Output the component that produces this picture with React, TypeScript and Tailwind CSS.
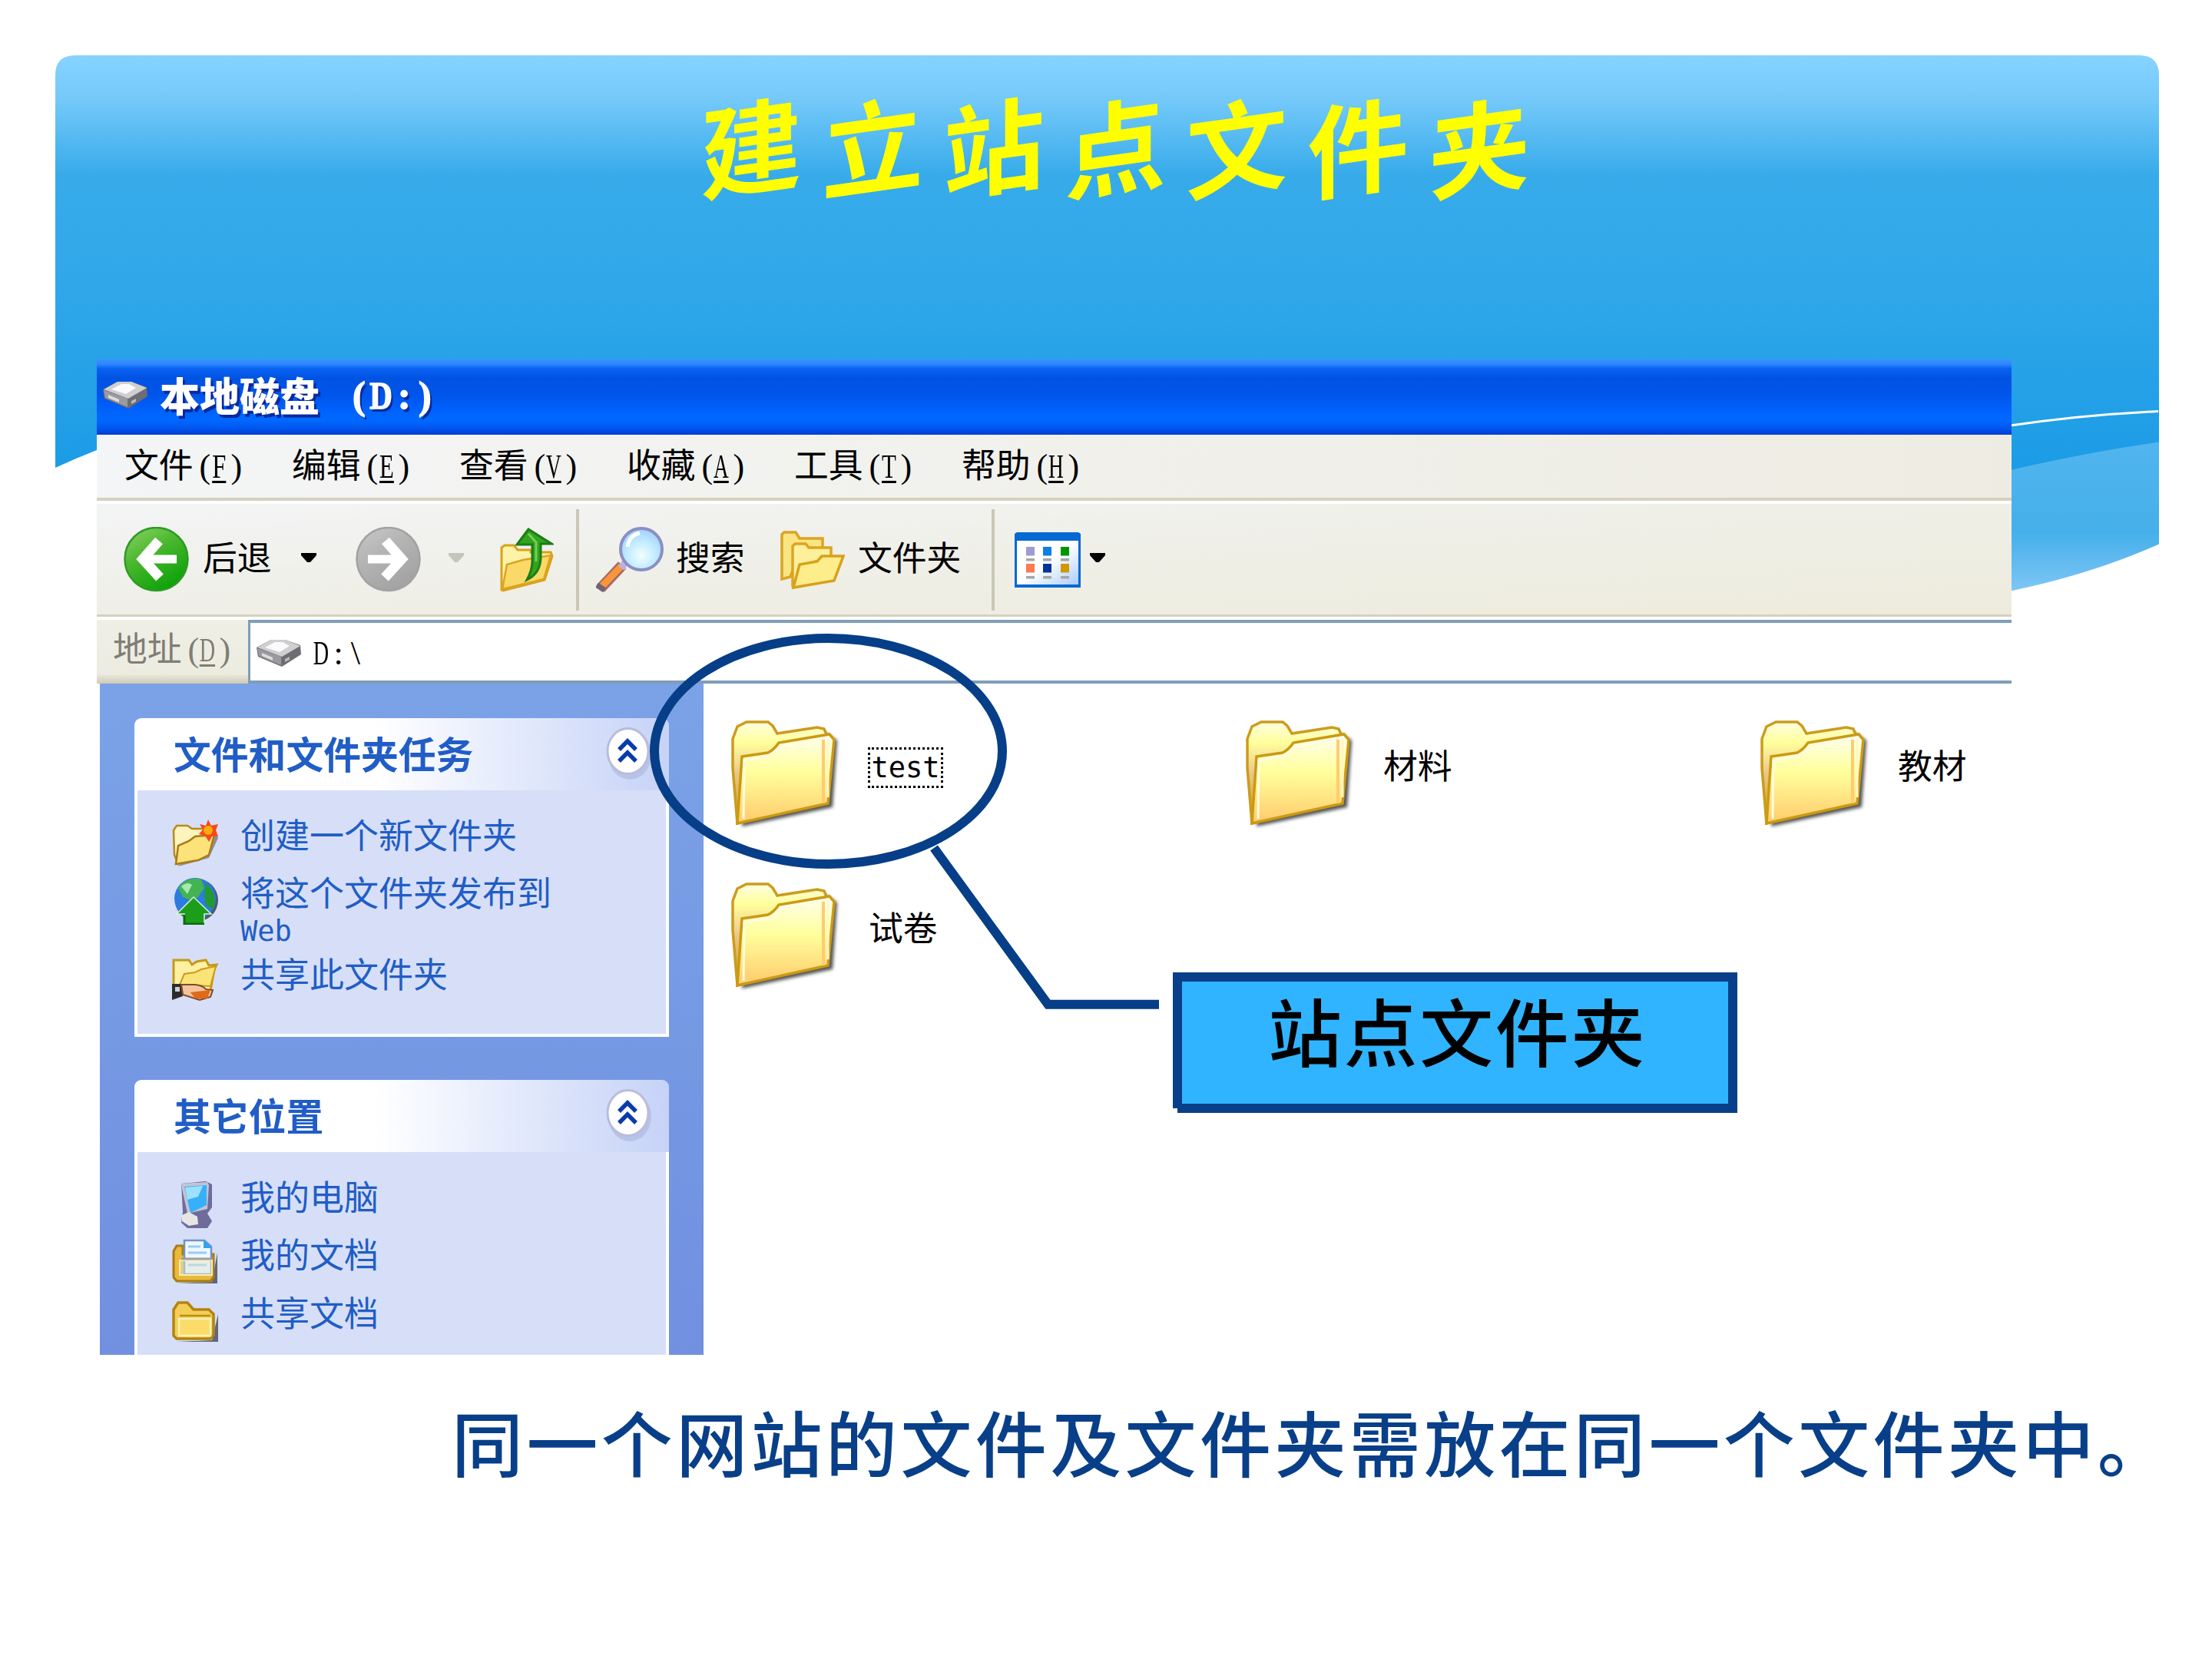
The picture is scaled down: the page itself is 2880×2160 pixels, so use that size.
import React from "react";

const CJK = "font-['Noto_Sans_CJK_SC',sans-serif]";

function Backdrop() {
  return (
    <svg className="absolute inset-0 h-[2160px] w-[2880px]" viewBox="0 0 2880 2160">
      <defs>
        <linearGradient id="sky" gradientUnits="userSpaceOnUse" x1="0" y1="72" x2="0" y2="650">
          <stop offset="0" stopColor="#86d3ff" />
          <stop offset="0.1" stopColor="#74c9f9" />
          <stop offset="0.27" stopColor="#37abea" />
          <stop offset="0.45" stopColor="#33a9ea" />
          <stop offset="1" stopColor="#189ae5" />
        </linearGradient>
        <linearGradient id="wave" gradientUnits="userSpaceOnUse" x1="0" y1="575" x2="0" y2="770">
          <stop offset="0" stopColor="#51b5ef" />
          <stop offset="0.6" stopColor="#45afea" />
          <stop offset="1" stopColor="#7ec6f5" />
        </linearGradient>
      </defs>
      <path d="M72 609V98Q72 72 98 72H2785Q2811 72 2811 98V620H2600V700H126V586Q98 597 72 609Z" fill="url(#sky)" />
      <path d="M2600 616Q2715 589 2811 575.5V708.5Q2715 751 2600 773Z" fill="url(#wave)" />
      <path d="M2610 555Q2710 540 2810 535.5" fill="none" stroke="#fff" strokeWidth="3" />
    </svg>
  );
}

function DriveIcon({ className }: { className: string }) {
  return (
    <svg className={className} viewBox="0 0 60 36">
      <path d="M1 11 20 1h18l20 7 1 12L34 36 3 23Z" fill="#6d6d73" />
      <path d="M2 11 20 1h18l20 8-24 14Z" fill="#cfcfd1" />
      <path d="M12 11 25 4h10l9 5-13 8Z" fill="#fafafa" />
      <path d="M2 12 33 23v11L4 22Z" fill="#9b9b9f" />
      <path d="M8 18l14 6v4L8 22Z" fill="#dcdcdc" />
      <path d="M38 26l6-3v4l-6 3Z" fill="#b9b9bb" />
    </svg>
  );
}

function RoundArrow({ disabled = false }: { disabled?: boolean }) {
  const id = disabled ? "ra-off" : "ra-on";
  return (
    <svg className="h-[86px] w-[85px] shrink-0" viewBox="0 0 85 86">
      <defs>
        <linearGradient id={id} x1="0" y1="0" x2="0.6" y2="1">
          <stop offset="0" stopColor={disabled ? "#c9c9c9" : "#8fd468"} />
          <stop offset="0.45" stopColor={disabled ? "#b4b4b4" : "#4cb82f"} />
          <stop offset="1" stopColor={disabled ? "#a3a3a3" : "#0fa20b"} />
        </linearGradient>
      </defs>
      <ellipse cx="42.5" cy="42" rx="41" ry="41" fill={`url(#${id})`} stroke={disabled ? "#a2a2a2" : "#2f9a26"} strokeWidth="2.5" />
      <g fill="none" stroke="#fff" transform={disabled ? "matrix(-1 0 0 1 85 0)" : undefined}>
        <path d="M69 42H24" strokeWidth="11" />
        <path d="M46 18 25 42 47 66" strokeWidth="13" strokeLinejoin="miter" />
      </g>
    </svg>
  );
}

function UpFolder() {
  return (
    <svg className="h-[84px] w-[70px] shrink-0" viewBox="0 0 70 84">
      <path d="M2 81V26L6 23H18L23 29H40V32H66L68 37 58 68 4 82Z" fill="#fdf3a8" stroke="#d9a21b" strokeWidth="3" />
      <path d="M3 80 9 48 30 42 66 36 57 67Z" fill="#fbd969" stroke="#dba51f" strokeWidth="2.5" />
      <path d="M37 2 67 21H53V40Q52 60 35 68 42 55 42 44V22H22Z" fill="#32a51f" stroke="#1c7d17" strokeWidth="3" />
      <path d="M37 8 47 19V44" fill="none" stroke="#75cf4f" strokeWidth="3" />
    </svg>
  );
}

function SearchIcon() {
  return (
    <svg className="h-[87px] w-[88px] shrink-0" viewBox="0 0 88 87">
      <defs>
        <radialGradient id="lens" cx="0.5" cy="0.65" r="0.6">
          <stop offset="0" stopColor="#f2ffff" />
          <stop offset="0.6" stopColor="#bfeaff" />
          <stop offset="1" stopColor="#a8d2fb" />
        </radialGradient>
      </defs>
      <path d="M34 50 6 80" stroke="#a96a63" strokeWidth="14" />
      <path d="M33 51 8 77" stroke="#f9953a" strokeWidth="9" />
      <path d="M8 76 4 82" stroke="#6d6577" strokeWidth="12" />
      <path d="M38 46 33 54" stroke="#b9b4dc" strokeWidth="9" />
      <ellipse cx="59" cy="29" rx="27" ry="27" fill="url(#lens)" stroke="#8a8fc4" strokeWidth="4" />
      <path d="M41 26Q43 11 57 8" fill="none" stroke="#fff" strokeWidth="5" />
    </svg>
  );
}

function FoldersIcon() {
  return (
    <svg className="h-[77px] w-[84px] shrink-0" viewBox="0 0 84 77">
      <path d="M2 63V5L5 2H20L25 10H55V24L20 40 13 60Z" fill="#fbe582" stroke="#dba424" strokeWidth="3.5" />
      <path d="M16 73V20L19 17H33L37 22H66V34L30 45Z" fill="#fdf09a" stroke="#dba424" strokeWidth="3.5" />
      <path d="M17 74 25 44 48 40 54 33H82L70 65Z" fill="#fdee8b" stroke="#d9a01b" strokeWidth="3.5" />
    </svg>
  );
}

function ViewsIcon() {
  const cells: [number, number, string][] = [
    [15, 19, "#9c9bd3"], [37, 19, "#0d7fe6"], [60, 19, "#009600"],
    [15, 41, "#fa7b50"], [37, 41, "#06349b"], [60, 41, "#cf9a00"],
  ];
  return (
    <svg className="h-[72px] w-[86px] shrink-0" viewBox="0 0 86 72">
      <defs>
        <linearGradient id="views" x1="0" y1="0" x2="1" y2="1">
          <stop offset="0.5" stopColor="#fff" />
          <stop offset="1" stopColor="#a9cdf8" />
        </linearGradient>
      </defs>
      <path d="M0 2 3 0H83L86 2V72H0Z" fill="#0768d2" />
      <rect x="3" y="11" width="80" height="57" fill="url(#views)" />
      {cells.map(([x, y, c]) => (
        <g key={`${x}-${y}`}>
          <rect x={x} y={y} width="11" height="11.5" fill={c} />
          <rect x={x} y={y + (y < 30 ? 15 : 16)} width="11" height="3.5" fill="#a6a6a6" />
        </g>
      ))}
    </svg>
  );
}

function FolderIcon() {
  return (
    <svg className="h-[144px] w-[144px] shrink-0 overflow-visible" viewBox="0 0 144 144">
      <defs>
        <linearGradient id="face" x1="0" y1="0" x2="0" y2="1">
          <stop offset="0" stopColor="#fffff0" />
          <stop offset="0.42" stopColor="#ffff9c" />
          <stop offset="1" stopColor="#ffca6b" />
        </linearGradient>
        <linearGradient id="back" x1="0" y1="0" x2="0" y2="1">
          <stop offset="0" stopColor="#fffde0" />
          <stop offset="0.2" stopColor="#ffff9c" />
          <stop offset="0.5" stopColor="#ecc889" />
          <stop offset="1" stopColor="#c99b12" />
        </linearGradient>
        <filter id="fshadow" x="-10%" y="-10%" width="125%" height="125%">
          <feGaussianBlur stdDeviation="2" />
        </filter>
      </defs>
      <path d="M14 138 132 113 138 26 120 14 16 100Z" fill="#555" filter="url(#fshadow)" />
      <path d="M2 24 8 8 20 2H48L54 7 60 17 112 9 121 11 124 18 120 104 8 134 2 62Z" fill="url(#back)" stroke="#cb9c1e" strokeWidth="3.5" />
      <path d="M14 47 48 42Q56 38 62 29L128 18 134 25 126 108 8 134Z" fill="url(#face)" stroke="#cb9a12" strokeWidth="3.5" />
      <path d="M16 128 17 52 48 46Q60 41 64 33L118 25" fill="none" stroke="#fffbe0" strokeWidth="3" />
      <path d="M120 25V108" stroke="#ffcb71" strokeWidth="4" />
      <path d="M126 24V100" stroke="#fff6c8" strokeWidth="3" />
    </svg>
  );
}

const taskIcon = "h-[62px] w-[62px]";

function NewFolder() {
  return (
    <svg className={taskIcon} viewBox="0 0 62 62">
      <path d="M8 61 48 50 60 24 56 16 20 50Z" fill="#8b8d9c" />
      <path d="M2 14 6 8H20L26 12H50V30L8 58 3 46Z" fill="#fdf3bd" stroke="#b98a1d" strokeWidth="2.5" />
      <path d="M5 58 8 34 22 28 30 22 55 20 48 46 34 53Z" fill="#fbe27b" stroke="#a87a14" strokeWidth="2.5" />
      <path d="M47 0 51 8 60 6 57 14 60 22 52 22 48 29 43 21 35 19 40 13 36 6 44 8Z" fill="#f8471d" />
      <circle cx="47" cy="14" r="6" fill="#ffac0a" />
    </svg>
  );
}

function PublishWeb() {
  return (
    <svg className={taskIcon} viewBox="0 0 62 62">
      <circle cx="32" cy="30" r="28" fill="#50577c" />
      <circle cx="30" cy="28" r="27" fill="#2b7be0" />
      <path d="M8 14Q20-2 38 3L42 14 34 26 24 30 14 26Z" fill="#44b351" />
      <path d="M44 8Q60 22 54 42L44 36 42 22Z" fill="#219a2f" />
      <path d="M12 12Q20 5 26 10L20 22Z" fill="#a7e9b0" />
      <path d="M28 26 51 48H42V61H16V48H6Z" fill="#1c9e1a" stroke="#d9f3d6" strokeWidth="1.5" />
      <path d="M16 49V61H42" fill="none" stroke="#0b6a10" strokeWidth="3" />
    </svg>
  );
}

function ShareFolder() {
  return (
    <svg className={taskIcon} viewBox="0 0 62 62">
      <path d="M2 36V2H22L26 8 32 4 44 2 48 9 58 8 55 14 50 42 4 42Z" fill="#fdf0a3" stroke="#c69a17" strokeWidth="3" />
      <path d="M10 34 16 20 30 18 38 14 57 10 50 36Z" fill="#fbe477" stroke="#c99b19" strokeWidth="2" />
      <path d="M0 33H14V49L0 54Z" fill="#2b2b2d" />
      <path d="M4 37H10V43H4Z" fill="#cfcfd2" />
      <path d="M12 34 30 34Q40 35 44 40L53 41 50 50 36 54 14 47Z" fill="#f4c39a" stroke="#7d4b2b" strokeWidth="2" />
      <path d="M24 44 50 41 46 52 30 52Z" fill="#e0691c" />
    </svg>
  );
}

function Computer() {
  return (
    <svg className={taskIcon} viewBox="0 0 62 62">
      <path d="M12 3 44 0 52 4 52 34 46 42 52 52 46 61H20L12 54 14 40Z" fill="#6f6c9c" />
      <path d="M12 3 46 1 48 5 46 36 20 42 13 10Z" fill="#c3c3d4" />
      <path d="M16 7 45 5 45 31 24 41Z" fill="#36b0fb" />
      <path d="M17 8 40 6 34 20 20 24Z" fill="#9be2fe" />
      <path d="M13 44 22 40 33 46 34 56 22 58 13 52Z" fill="#e7e6e4" />
    </svg>
  );
}

function MyDocs() {
  return (
    <svg className={taskIcon} viewBox="0 0 62 62">
      <path d="M6 58H59V18L52 56Z" fill="#63667a" />
      <path d="M2 16 6 9H14V20H54V50L50 55H6L2 50Z" fill="#e9b93a" stroke="#a97c14" strokeWidth="3" />
      <path d="M16 2H42L51 10V46H16Z" fill="#eef8ff" stroke="#6f93c8" strokeWidth="2.5" />
      <path d="M41 1 52 12H41Z" fill="#2da3f5" />
      <path d="M21 10H37M21 18H45M21 34H45" stroke="#9ccbf5" strokeWidth="3" />
      <path d="M10 28H52V47H10Z" fill="#dfe3cf" fillOpacity="0.5" stroke="#f8efb9" strokeWidth="2" />
      <path d="M12 26H52" stroke="#9c9f9f" strokeWidth="3" />
    </svg>
  );
}

function SharedDocs() {
  return (
    <svg className={taskIcon} viewBox="0 0 62 62">
      <path d="M6 58H60V22L52 56Z" fill="#63667a" />
      <path d="M2 16 8 7H20L28 16H48L54 22V49L50 54H6L2 50Z" fill="#f5cf55" stroke="#b48412" strokeWidth="3.5" />
      <path d="M9 28H50V50H9Z" fill="#fbdc6b" stroke="#fff3b4" strokeWidth="2.5" />
      <path d="M10 24H50" stroke="#b98d1a" strokeWidth="2.5" />
    </svg>
  );
}

function Caret({ muted = false, className = "" }: { muted?: boolean; className?: string }) {
  return (
    <svg className={`-mt-[7px] h-[12px] w-[20px] shrink-0 ${className}`} viewBox="0 0 20 12">
      <path d="M0 0H20V3L12 12H8L0 3Z" fill={muted ? "#c6c5bd" : "#000"} />
    </svg>
  );
}

function Label({ children, className = "" }: { children: React.ReactNode; className?: string }) {
  return (
    <span className={`${CJK} shrink-0 whitespace-nowrap text-[44.8px] leading-[60px] ${className}`}>{children}</span>
  );
}

/* Serif capitals are condensed so that each one fits a half-width cell. */
const condensed: Record<string, string> = {
  D: "scale-x-[0.64]", F: "scale-x-[0.74]", E: "scale-x-[0.7]", V: "scale-x-[0.62]", A: "scale-x-[0.62]",
  T: "scale-x-[0.7]", H: "scale-x-[0.62]",
};

function Half({ text, className = "" }: { text: string; className?: string }) {
  return (
    <span className={`inline-flex font-['Liberation_Serif',serif] text-[44px] leading-[44px] ${className}`}>
      {Array.from(text).map((c, i) => (
        <span key={i} className="flex w-[22.4px] justify-center">
          <span className={condensed[c] ?? ""}>{c}</span>
        </span>
      ))}
    </span>
  );
}

function Hotkey({ k }: { k: string }) {
  return (
    <span className="inline-flex font-['Liberation_Serif',serif] text-[44px] leading-[44px]">
      <span className="w-[22.4px] pl-[8px]">(</span>
      <span className="flex w-[22.4px] justify-center">
        <span className={`underline decoration-[3px] underline-offset-[4px] ${condensed[k]}`}>{k}</span>
      </span>
      <span className="w-[22.4px] pl-[4px]">)</span>
    </span>
  );
}

function Chevrons() {
  return (
    <svg className="h-[72px] w-[60px]" viewBox="0 0 60 72">
      <ellipse cx="32" cy="37" rx="28" ry="32" fill="#aab4dc" opacity="0.6" />
      <ellipse cx="29.5" cy="32" rx="26.5" ry="29.5" fill="#fff" stroke="#b9bcdc" strokeWidth="3" />
      <path d="M18 30 29 19 40 30M18 45 29 34 40 45" fill="none" stroke="#0a3bab" strokeWidth="5.5" />
    </svg>
  );
}

function CardHeader({ title }: { title: string }) {
  return (
    <div className="flex h-[94px] items-center justify-between rounded-t-[9px] bg-gradient-to-r from-white from-45% to-[#c6d3f7] pl-[51px] pr-[23px]">
      <span className={`${CJK} -mt-[5px] text-[48.8px] font-bold leading-[60px] text-[#215dc6]`}>{title}</span>
      <Chevrons />
    </div>
  );
}

function Task({ icon, children, className }: { icon: React.ReactNode; children: React.ReactNode; className: string }) {
  return (
    <div className={`flex items-start text-[#215dc6] ${className}`}>
      <span className="-ml-px w-[89px] shrink-0">{icon}</span>
      <span className={`${CJK} -mt-[11px] whitespace-nowrap text-[45px] leading-[60px]`}>{children}</span>
    </div>
  );
}

function Item({ name, focused = false }: { name: string; focused?: boolean }) {
  return (
    <div className="flex h-[211px] w-[670px] shrink-0 items-start">
      <FolderIcon />
      {focused ? (
        <span className="ml-[34px] mt-[35px] flex h-[53px] w-[98px] items-center justify-center border-[3px] border-dotted border-black">
          <span className="font-['DejaVu_Sans_Mono',monospace] text-[37px] leading-[44px]">{name}</span>
        </span>
      ) : (
        <Label className="mt-[27px] pl-[35px]">{name}</Label>
      )}
    </div>
  );
}

function Explorer() {
  const menus = [["文件", "F"], ["编辑", "E"], ["查看", "V"], ["收藏", "A"], ["工具", "T"], ["帮助", "H"]];
  return (
    <section className="relative h-[1296px] w-[2493px] overflow-hidden text-black">
      <header className="flex h-[98px] items-center bg-[linear-gradient(180deg,#3a92ff_0%,#2a84fd_7%,#0a62f2_12%,#0053e2_25%,#0054e8_45%,#0060fb_65%,#0069ff_80%,#0055ee_92%,#003cd0_100%)] pl-[7px]">
        <DriveIcon className="-mt-[6px] h-[38px] w-[60px]" />
        <h2 className={`${CJK} -mt-[7px] ml-[15px] flex whitespace-nowrap text-[52px] font-black leading-[70px] text-white [text-shadow:3px_4px_0_#0a2a9c]`}>
          <span>本地磁盘</span>
          <span className="ml-[40px] mt-[8px] flex font-['Liberation_Serif',serif] text-[50px] font-bold leading-[56px] [-webkit-text-stroke:1.5px_white]">
            <span className="w-[27px] pl-[3px]">(</span>
            <span className="flex w-[27px] justify-center"><span className="scale-x-[0.82]">D</span></span>
            <span className="w-[27px] pl-[8px]">:</span>
            <span className="w-[27px] pl-[8px]">)</span>
          </span>
        </h2>
      </header>

      <nav className="flex h-[90px] border-b-[4px] border-white bg-gradient-to-r from-[#f4f5f6] to-[#eeece2]">
        <div className="flex h-[86px] w-full items-center border-b-[4px] border-[#d5d1bd] pb-[8px] pl-[36px]">
          {menus.map(([t, k]) => (
            <Label key={k} className="w-[218px]">
              {t}
              <Hotkey k={k} />
            </Label>
          ))}
        </div>
      </nav>

      <div className="flex h-[151px] items-center border-b-[4px] border-white bg-gradient-to-br from-[#f3f4f5] via-[#efefe7] to-[#edebdc]">
        <div className="flex h-[147px] w-full items-center border-b-[3px] border-[#d5d1bd] pl-[35px] pt-[2px]">
          <RoundArrow />
          <Label className="-mt-[10px] ml-[18px] w-[90px]">后退</Label>
          <Caret className="ml-[38px]" />
          <span className="ml-[51px] flex"><RoundArrow disabled /></span>
          <Caret muted className="ml-[36px]" />
          <span className="ml-[47px] flex"><UpFolder /></span>
          <span className="ml-[29px] h-[132px] w-[4px] bg-[#cac7b4]" />
          <span className="ml-[22px] flex"><SearchIcon /></span>
          <Label className="-mt-[10px] ml-[16px] w-[90px]">搜索</Label>
          <span className="ml-[46px] flex"><FoldersIcon /></span>
          <Label className="-mt-[10px] ml-[17px] w-[135px]">文件夹</Label>
          <span className="ml-[39px] h-[132px] w-[4px] bg-[#cac7b4]" />
          <span className="ml-[26px] flex"><ViewsIcon /></span>
          <Caret className="ml-[12px]" />
        </div>
      </div>

      <div className="flex h-[83px]">
        <div className="flex w-[197px] items-center bg-[linear-gradient(180deg,#efefe6_0%,#ecebe0_85%,#cfc9b5_100%)] pb-[14px] pl-[21px] text-[#807d75]">
          <Label>
            地址
            <Hotkey k="D" />
          </Label>
        </div>
        <div className="flex flex-1 items-center border-y-[4px] border-l-[3px] border-[#7f9db9] bg-white pl-[7px] pt-[3px]">
          <DriveIcon className="h-[38px] w-[60px]" />
          <Half text={"D:\\"} className="ml-[14px] mt-[2px]" />
        </div>
      </div>

      <div className="flex h-[874px] bg-white">
        <aside className="ml-[4px] flex w-[786px] shrink-0 flex-col bg-gradient-to-b from-[#7ba2e7] to-[#7190e0] pl-[45px] pr-[45px] pt-[45px]">
          <div>
            <CardHeader title="文件和文件夹任务" />
            <div className="h-[321px] border-[4px] border-t-0 border-white bg-[#d6dff7] pl-[46px] pt-[38px]">
              <Task icon={<NewFolder />} className="h-[75px]">创建一个新文件夹</Task>
              <Task icon={<PublishWeb />} className="h-[106px]">
                将这个文件夹发布到
                <span className="block font-['DejaVu_Sans_Mono',monospace] text-[37px] leading-[44px]">Web</span>
              </Task>
              <Task icon={<ShareFolder />} className="h-[75px]">共享此文件夹</Task>
            </div>
          </div>
          <div className="mt-[56px]">
            <CardHeader title="其它位置" />
            <div className="h-[264px] border-x-[4px] border-white bg-[#d6dff7] pl-[46px] pt-[38px]">
              <Task icon={<Computer />} className="h-[75px]">我的电脑</Task>
              <Task icon={<MyDocs />} className="h-[76px]">我的文档</Task>
              <Task icon={<SharedDocs />} className="h-[75px]">共享文档</Task>
            </div>
          </div>
        </aside>
        <div className="flex w-[2400px] shrink-0 flex-wrap content-start pl-[36px] pt-[48px]">
          <Item name="test" focused />
          <Item name="材料" />
          <Item name="教材" />
          <Item name="试卷" />
        </div>
      </div>
    </section>
  );
}

export default function App() {
  return (
    <main className="relative h-[2160px] w-[2880px] overflow-hidden bg-white">
      <Backdrop />
      <h1 className={`${CJK} relative flex h-[468px] items-start pl-[899px] pt-[106px] text-[132px] font-bold leading-[160px] text-[#ffff00]`}>
        {Array.from("建立站点文件夹").map((c) => (
          <span key={c} className="w-[158px] -skew-y-[8deg] text-center">{c}</span>
        ))}
      </h1>
      <div className="relative ml-[126px]">
        <Explorer />
      </div>
      <p className={`${CJK} relative mt-[42px] whitespace-nowrap pl-[588px] text-[93px] font-medium leading-[140px] tracking-[4.4px] text-[#083f88]`}>
        同一个网站的文件及文件夹需放在同一个文件夹中。
      </p>

      <svg className="absolute left-[840px] top-[820px] h-[500px] w-[680px]" viewBox="840 820 680 500">
        <g fill="none" stroke="#063e88" strokeWidth="12">
          <ellipse cx="1078.5" cy="978" rx="226.5" ry="147" />
          <path d="M1216 1104 1364.5 1307.7H1509" />
        </g>
      </svg>
      <div className="absolute left-[1527px] top-[1266px] flex h-[183px] w-[735px] justify-center border-[12px] border-[#083f88] bg-[#31b4ff]">
        <span className={`${CJK} -mt-[3px] ml-[6px] whitespace-nowrap text-[96px] font-medium leading-[130px] tracking-[2.6px] text-black`}>站点文件夹</span>
        <span className="absolute -bottom-[12px] -left-[12px] h-[6px] w-[6px] bg-white" />
      </div>
    </main>
  );
}
